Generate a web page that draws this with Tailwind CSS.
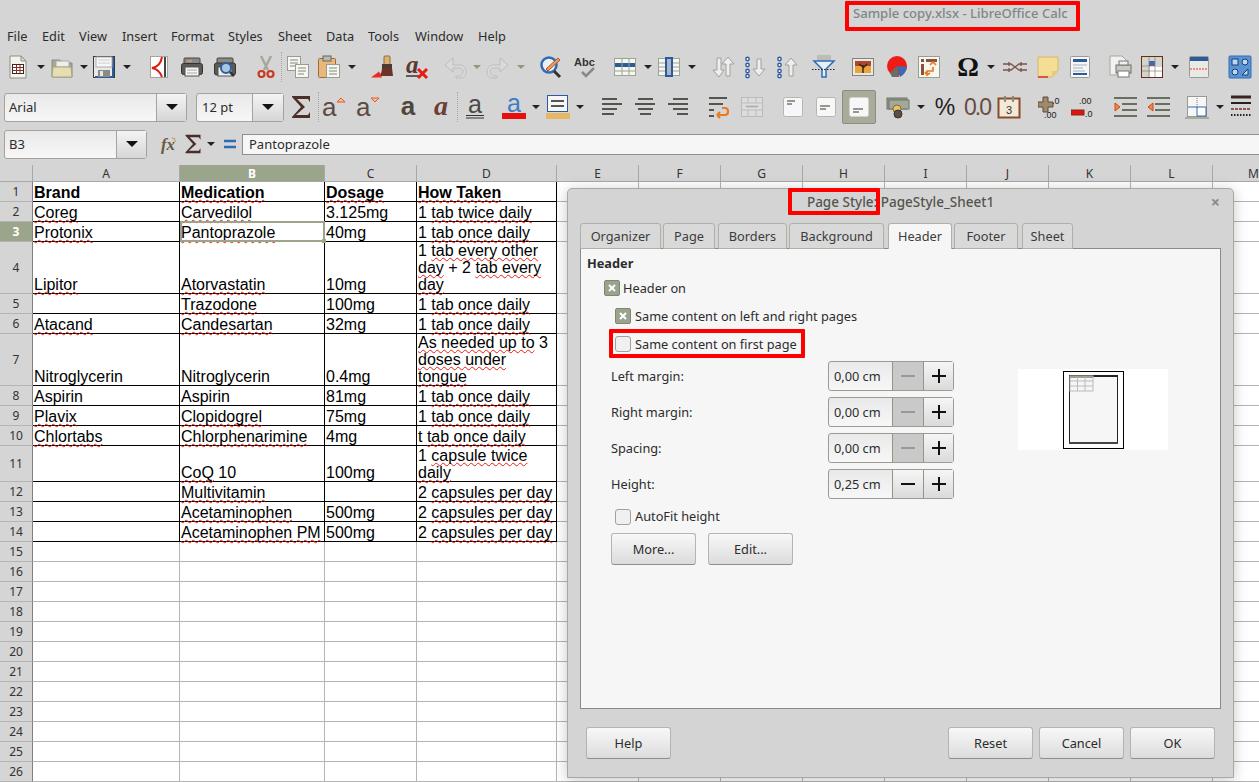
<!DOCTYPE html>
<html lang="en">
<head>
<meta charset="UTF-8">
<title>Sample copy.xlsx - LibreOffice Calc</title>
<script src="https://cdn.jsdelivr.net/npm/@tailwindcss/browser@4"></script>
</head>
<body class="bg-[#d5d5d5] overflow-hidden">
<div class="relative w-[1259px] h-[782px] overflow-hidden flex flex-col font-['Noto_Sans',sans-serif] text-[12.75px] text-[#2c2c2c]">

  <!-- Title bar -->
  <div class="h-[26px] shrink-0 flex items-center pl-[853px] pt-[2px] font-medium text-[13.1px] text-[#7d8885] whitespace-nowrap">Sample copy.xlsx - LibreOffice Calc</div>

  <!-- Menu -->
  <div class="h-[22px] shrink-0 flex items-center pl-[7px] whitespace-nowrap">
    <span class="w-[35px]">File</span><span class="w-[37px]">Edit</span><span class="w-[43px]">View</span><span class="w-[49px]">Insert</span><span class="w-[57px]">Format</span><span class="w-[50px]">Styles</span><span class="w-[48px]">Sheet</span><span class="w-[42px]">Data</span><span class="w-[47px]">Tools</span><span class="w-[63px]">Window</span><span>Help</span>
  </div>

  <!-- Standard toolbar -->
  <div class="h-[38px] shrink-0 flex items-center pl-[6px]">
    <svg class="w-6 h-6 shrink-0" viewBox="0 0 24 24"><path d="M4 1h11l5 5v17H4z" fill="#f4f4ef" stroke="#8d8d86"/><path d="M15 1v5h5z" fill="#dcdcd2" stroke="#8d8d86"/><rect x="6.500" y="9.500" width="11" height="9" fill="#fff" stroke="#3c2420"/><path d="M7 12.500h10M7 15.500h10M10.500 10v8M14 10v8" stroke="#8c2b20"/></svg>
    <svg class="w-2 h-2 shrink-0 ml-[7px]" viewBox="0 0 8 8"><path d="M0 2h8L4 6z" fill="#222"/></svg>
    <svg class="w-6 h-6 shrink-0 ml-[5px]" viewBox="0 0 24 24"><path d="M2 5h8l2 3h10v14H2z" fill="#a6a893" stroke="#8a8c7c"/><rect x="6" y="6" width="13" height="6" fill="#efefe8" stroke="#aaa"/><path d="M3 12h18l1 10H2z" fill="#e6deb0" stroke="#a8a488"/></svg>
    <svg class="w-2 h-2 shrink-0 ml-[6px]" viewBox="0 0 8 8"><path d="M0 2h8L4 6z" fill="#222"/></svg>
    <svg class="w-6 h-6 shrink-0 ml-[4px]" viewBox="0 0 24 24"><rect x="1.500" y="1.500" width="21" height="21" fill="#e9e9e6" stroke="#3a3a3a"/><path d="M21 2v20M3 22h18" stroke="#2d5c9c" stroke-width="2"/><rect x="4" y="2" width="16" height="10" fill="#f8f8f8" stroke="#aaa"/><path d="M6 5h12M6 8h12" stroke="#c9c9c9"/><rect x="6" y="15" width="12" height="7" fill="#8a8a86"/><rect x="8" y="16" width="3" height="5" fill="#e8e8e8"/></svg>
    <svg class="w-2 h-2 shrink-0 ml-[7px]" viewBox="0 0 8 8"><path d="M0 2h8L4 6z" fill="#222"/></svg>
    <svg class="w-6 h-6 shrink-0 ml-[16px]" viewBox="0 0 24 24"><rect x="3.500" y="1.500" width="17" height="21" fill="#fff" stroke="#a5a5a0"/><path d="M18 2v20" stroke="#444" stroke-width="2"/><path d="M15 2C14 8 11 12 5 13c5 1 8 3 10 9" fill="none" stroke="#e21a10" stroke-width="2"/></svg>
    <svg class="w-6 h-6 shrink-0 ml-[9px]" viewBox="0 0 24 24"><rect x="4" y="3" width="16" height="6" rx="1" fill="#8a8a84" stroke="#444"/><path d="M7 6h5" stroke="#c9a08a" stroke-width="1.500"/><rect x="1.500" y="8.500" width="21" height="11" rx="2" fill="#5b5b58" stroke="#333"/><rect x="5" y="12" width="14" height="9" fill="#f4f4f0" stroke="#555"/><path d="M7 15h10M7 18h10" stroke="#aaa"/></svg>
    <svg class="w-6 h-6 shrink-0 ml-[9px]" viewBox="0 0 24 24"><rect x="4" y="3" width="16" height="6" rx="1" fill="#8a8a84" stroke="#444"/><rect x="1.500" y="8" width="21" height="12" rx="2" fill="#5b5b58" stroke="#333"/><rect x="5" y="12" width="14" height="9" fill="#eee" stroke="#555"/><circle cx="13" cy="13" r="5" fill="#a9c6df" stroke="#2f5f9e" stroke-width="2"/><path d="M17 17l4 4" stroke="#333" stroke-width="2.500"/></svg>
    <svg class="w-6 h-6 shrink-0 ml-[17px]" viewBox="0 0 24 24"><path d="M7 1l7 14M17 1l-7 14" stroke="#a7a79e" stroke-width="2.500"/><circle cx="7.500" cy="19" r="3" fill="none" stroke="#c83a24" stroke-width="2.200"/><circle cx="16.500" cy="19" r="3" fill="none" stroke="#c83a24" stroke-width="2.200"/></svg>
    <span class="w-px h-[30px] shrink-0 ml-[3px] border-l border-dotted border-[#a8a8a8]"></span>
    <svg class="w-6 h-6 shrink-0 ml-[4px]" viewBox="0 0 24 24"><rect x="1.500" y="1.500" width="13" height="14" fill="#f6f6f2" stroke="#9b9b92"/><path d="M4 5h8M4 8h8M4 11h6" stroke="#85857d"/><rect x="9.500" y="9.500" width="13" height="13" fill="#f6f6f2" stroke="#9b9b92"/><path d="M12 13h8M12 16h8M12 19h6" stroke="#7f9070"/></svg>
    <svg class="w-6 h-6 shrink-0 ml-[7px]" viewBox="0 0 24 24"><rect x="1.500" y="3.500" width="17" height="19" rx="1" fill="#e8b77c" stroke="#9b6b3c"/><rect x="6" y="1" width="8" height="5" fill="#b9b9b0" stroke="#666"/><rect x="9.500" y="9.500" width="13" height="13" fill="#f6f6f2" stroke="#9b9b92"/><path d="M12 13h8M12 16h8M12 19h8" stroke="#7f9070"/></svg>
    <svg class="w-2 h-2 shrink-0 ml-[7px]" viewBox="0 0 8 8"><path d="M0 2h8L4 6z" fill="#222"/></svg>
    <svg class="w-6 h-6 shrink-0 ml-[15px]" viewBox="0 0 24 24"><rect x="13" y="1" width="6" height="9" rx="1" fill="#dcb274" stroke="#8f6b36"/><rect x="11" y="9" width="10" height="4" fill="#4a3a30"/><path d="M11 13h10l1 8H8c2-2 3-5 3-8z" fill="#6b3328"/><path d="M0 22.500l8-6 3 6z" fill="#ee2a1c"/></svg>
    <svg class="w-6 h-6 shrink-0 ml-[10px] overflow-visible" viewBox="0 0 24 24"><text x="1" y="18" font-family="Liberation Serif" font-style="italic" font-weight="700" font-size="25" fill="#5c3a32">a</text><path d="M1 21h13" stroke="#333" stroke-width="1.500"/><path d="M13 14l9 9M22 14l-9 9" stroke="#e81c10" stroke-width="3"/></svg>
    <svg class="w-6 h-6 shrink-0 ml-[14px]" viewBox="0 0 24 24"><path d="M10 3L2 10l8 7v-4h7c2 0 3 2 3 4s-2 4-4 4h-3v2h4c4 0 6-3 6-6s-2-7-6-7h-7z" fill="#dadad8" stroke="#bcbcba"/></svg>
    <svg class="w-2 h-2 shrink-0 ml-[6px]" viewBox="0 0 8 8"><path d="M0 2h8L4 6z" fill="#8d9a80"/></svg>
    <svg class="w-6 h-6 shrink-0 ml-[5px]" viewBox="0 0 24 24"><path d="M14 3l8 7-8 7v-4H7c-2 0-3 2-3 4s2 4 4 4h3v2H7c-4 0-6-3-6-6s2-7 6-7h7z" fill="#dadad8" stroke="#bcbcba"/></svg>
    <svg class="w-2 h-2 shrink-0 ml-[7px]" viewBox="0 0 8 8"><path d="M0 2h8L4 6z" fill="#8d9a80"/></svg>
    <svg class="w-6 h-6 shrink-0 ml-[14px]" viewBox="0 0 24 24"><circle cx="10" cy="10" r="7.500" fill="#eef0ee" stroke="#2f6cb4" stroke-width="2.500"/><path d="M15 16l6 6" stroke="#333" stroke-width="3"/><path d="M7 14L19 3l2 2L9 16z" fill="#e8a060" stroke="#b0502c"/></svg>
    <svg class="w-6 h-6 shrink-0 ml-[11px]" viewBox="0 0 24 24"><text x="0" y="11" font-family="Liberation Sans" font-weight="700" font-size="11" fill="#333">Abc</text><path d="M8 17l4 4 8-8" fill="none" stroke="#8a8a84" stroke-width="2.500"/></svg>
    <svg class="w-6 h-6 shrink-0 ml-[15px]" viewBox="0 0 24 24"><rect x="1.500" y="3.500" width="21" height="17" fill="#f6f6f2" stroke="#9ca58f"/><rect x="2" y="8" width="20" height="4" fill="#2c5a9c"/><path d="M2 16h20M9 4v16M16 4v16" stroke="#9ca58f"/></svg>
    <svg class="w-2 h-2 shrink-0 ml-[7px]" viewBox="0 0 8 8"><path d="M0 2h8L4 6z" fill="#222"/></svg>
    <svg class="w-6 h-6 shrink-0 ml-[5px]" viewBox="0 0 24 24"><rect x="1.500" y="3.500" width="21" height="17" fill="#f6f6f2" stroke="#9ca58f"/><path d="M2 8h20M2 12h20M2 16h20" stroke="#9ca58f"/><rect x="9" y="3" width="6" height="18" fill="#a9b6c4" stroke="#2c5a9c" stroke-width="2"/></svg>
    <svg class="w-2 h-2 shrink-0 ml-[7px]" viewBox="0 0 8 8"><path d="M0 2h8L4 6z" fill="#222"/></svg>
    <svg class="w-6 h-6 shrink-0 ml-[15px]" viewBox="0 0 24 24"><path d="M6 3h4v12h3l-5 7-6-7h4z" fill="#eee" stroke="#a0a098"/><path d="M17 2l6 7h-4v12h-4V9h-4z" fill="#eee" stroke="#a0a098"/></svg>
    <svg class="w-6 h-6 shrink-0 ml-[9px]" viewBox="0 0 24 24"><g fill="#fff" stroke="#2c5a9c" stroke-width="1.400"><circle cx="3.500" cy="4" r="1.700"/><circle cx="3.500" cy="10" r="1.700"/><circle cx="3.500" cy="16" r="1.700"/><circle cx="3.500" cy="21" r="1.700"/></g><path d="M13 4h4v10h4l-6 7-6-7h4z" fill="#eee" stroke="#a0a098"/></svg>
    <svg class="w-6 h-6 shrink-0 ml-[8px]" viewBox="0 0 24 24"><g fill="#fff" stroke="#2c5a9c" stroke-width="1.400"><circle cx="3.500" cy="4" r="1.700"/><circle cx="3.500" cy="10" r="1.700"/><circle cx="3.500" cy="16" r="1.700"/><circle cx="3.500" cy="21" r="1.700"/></g><path d="M15 3l6 7h-4v11h-4V10H9z" fill="#eee" stroke="#a0a098"/></svg>
    <svg class="w-6 h-6 shrink-0 ml-[12px]" viewBox="0 0 24 24"><rect x="5" y="0" width="14" height="6" fill="#bcbcb8"/><path d="M2 6h20l-8 8v8h-4v-8z" fill="#e8eef4" stroke="#2f6cb4" stroke-width="1.500"/><path d="M0 14.500h24" stroke="#222" stroke-dasharray="1.500 1.500"/></svg>
    <svg class="w-6 h-6 shrink-0 ml-[15px]" viewBox="0 0 24 24"><rect x="1.500" y="3.500" width="21" height="17" fill="#e9e9e4" stroke="#85857d"/><rect x="4" y="6" width="16" height="12" fill="#e8a43c"/><path d="M4 6h16v5H4z" fill="#a8482c"/><path d="M12 18V10M12 12l-4-3M12 13l4-4" stroke="#3a1c14" stroke-width="1.400"/></svg>
    <svg class="w-6 h-6 shrink-0 ml-[10px]" viewBox="0 0 24 24"><circle cx="12" cy="11" r="10" fill="#ee1c16"/><path d="M12 11l10 1c-1 6-5 9-7 10z" fill="#3a6cb4"/><path d="M5 18l7-7 2 11H7z" fill="#6d6d68"/></svg>
    <svg class="w-6 h-6 shrink-0 ml-[8px]" viewBox="0 0 24 24"><rect x="1.500" y="1.500" width="21" height="21" fill="#f7f7f2" stroke="#98a08a"/><rect x="9" y="4" width="11" height="3" fill="#8a5040"/><rect x="4" y="4" width="3" height="3" fill="#8a5040"/><rect x="4" y="9" width="3" height="11" fill="#8a5040"/><path d="M10 20v-4h6v-4M13 10l3-3 3 3M8 17l2 3 3-2" fill="none" stroke="#ea7a1e" stroke-width="1.700"/></svg>
    <svg class="w-6 h-6 shrink-0 ml-[15px] overflow-visible" viewBox="0 0 24 24"><text x="12" y="21" text-anchor="middle" font-family="Liberation Serif" font-weight="700" font-size="27" fill="#111">Ω</text></svg>
    <svg class="w-2 h-2 shrink-0 ml-[7px]" viewBox="0 0 8 8"><path d="M0 2h8L4 6z" fill="#222"/></svg>
    <svg class="w-6 h-6 shrink-0 ml-[8px]" viewBox="0 0 24 24"><path d="M0 9h8l4 3 4-3h8M0 15h8l4-3 4 3h8M6 7v4M18 7v4M6 13v4M18 13v4" fill="none" stroke="#7a5248" stroke-width="1.300"/></svg>
    <svg class="w-6 h-6 shrink-0 ml-[9px]" viewBox="0 0 24 24"><path d="M2 2h20v14l-6 6H2z" fill="#f4dd94" stroke="#d8b66a"/><path d="M16 22v-6h6z" fill="#e7c97a"/><path d="M2 22h10" stroke="#d83020" stroke-width="1.500"/></svg>
    <svg class="w-6 h-6 shrink-0 ml-[8px]" viewBox="0 0 24 24"><rect x="2.500" y="1.500" width="19" height="21" rx="1" fill="#f6f6f6" stroke="#9a9a94"/><rect x="5" y="4" width="14" height="3" fill="#2c5a9c"/><path d="M5 10h14M5 13h10M5 16h12" stroke="#a6b0bc"/><rect x="5" y="18" width="14" height="2" fill="#2c5a9c"/></svg>
    <svg class="w-6 h-6 shrink-0 ml-[16px]" viewBox="0 0 24 24"><path d="M2 1h12l5 5v14H2z" fill="#f2f2ee" stroke="#a5a59e"/><rect x="8" y="10" width="15" height="8" fill="#c9c9c4" stroke="#6e6e68"/><rect x="11" y="6" width="9" height="4" fill="#eee" stroke="#777"/><rect x="10" y="16" width="11" height="6" fill="#fff" stroke="#777"/></svg>
    <svg class="w-6 h-6 shrink-0 ml-[8px]" viewBox="0 0 24 24"><rect x="1.500" y="1.500" width="21" height="21" fill="#fff" stroke="#6b2c20"/><rect x="2" y="2" width="8" height="20" fill="#d4d4ce"/><rect x="2" y="2" width="20" height="8" fill="#d4d4ce"/><rect x="9" y="6" width="6" height="5" fill="#3c6cb4"/><path d="M9 2v20M15 2v20M2 11h20M2 16h20" stroke="#8a6a60" stroke-width=".6"/></svg>
    <svg class="w-2 h-2 shrink-0 ml-[7px]" viewBox="0 0 8 8"><path d="M0 2h8L4 6z" fill="#222"/></svg>
    <svg class="w-6 h-6 shrink-0 ml-[8px]" viewBox="0 0 24 24"><rect x="2.500" y="1.500" width="19" height="21" rx="1" fill="#e9e9e6" stroke="#9a9a94"/><rect x="3" y="2" width="18" height="4" fill="#2c5a9c"/><path d="M3 14h18" stroke="#ee3a20" stroke-dasharray="2 1"/></svg>
    <svg class="w-6 h-6 shrink-0 ml-[17px]" viewBox="0 0 24 24"><rect x="1" y="1" width="22" height="22" rx="1" fill="#5b93d2" stroke="#2f6cb4"/><g fill="#bcd6ee" stroke="#173f75"><rect x="4" y="4" width="6" height="6"/><circle cx="17" cy="7" r="3"/><circle cx="7" cy="17" r="3"/><path d="M14 20l6-6v6z"/></g></svg>
  </div>

  <!-- Formatting toolbar -->
  <div class="h-[42px] shrink-0 flex items-center pl-[4px]">
    <div class="w-[183px] h-[29px] shrink-0 flex rounded-[3px] border border-[#a3a39b] bg-gradient-to-b from-[#e9e9e9] to-[#f7f7f7]">
      <span class="flex-1 pl-[4px] pt-[2px] self-center text-[13px]">Arial</span>
      <span class="w-[30px] flex items-center justify-center border-l border-[#a3a39b] bg-gradient-to-b from-[#f4f4f4] to-[#d6d6d6]"><svg class="w-3 h-2" viewBox="0 0 12 8"><path d="M0 1h12L6 7z" fill="#111"/></svg></span>
    </div>
    <div class="w-[88px] h-[29px] shrink-0 ml-[9px] flex rounded-[3px] border border-[#a3a39b] bg-gradient-to-b from-[#e9e9e9] to-[#f7f7f7]">
      <span class="flex-1 pl-[5px] pt-[2px] self-center text-[13px]">12 pt</span>
      <span class="w-[31px] flex items-center justify-center border-l border-[#a3a39b] bg-gradient-to-b from-[#f4f4f4] to-[#d6d6d6]"><svg class="w-3 h-2" viewBox="0 0 12 8"><path d="M0 1h12L6 7z" fill="#111"/></svg></span>
    </div>
    <svg class="w-6 h-6 shrink-0 ml-[5px]" viewBox="0 0 24 24"><path d="M3 1h18v6l-2-3H8l8 8-9 8h12l2-3v6H3v-1l9-10L3 2z" fill="#4a2e28"/></svg>
    <span class="w-px h-[30px] shrink-0 ml-[5px] border-l border-dotted border-[#a8a8a8]"></span>
    <svg class="w-6 h-6 shrink-0 ml-[3px] overflow-visible" viewBox="0 0 24 24"><text x="0" y="21" font-family="Liberation Sans" font-size="26" fill="#5c4a44">a</text><path d="M15 7l4-4 4 4z" fill="#f4c490" stroke="#e2572a"/></svg>
    <svg class="w-6 h-6 shrink-0 ml-[10px] overflow-visible" viewBox="0 0 24 24"><text x="0" y="21" font-family="Liberation Sans" font-size="26" fill="#5c4a44">a</text><path d="M15 3l4 4 4-4z" fill="#f4c490" stroke="#e2572a"/></svg>
    <svg class="w-6 h-6 shrink-0 ml-[16px] overflow-visible" viewBox="0 0 24 24"><text x="12" y="20" text-anchor="middle" font-family="Liberation Sans" font-weight="700" font-size="26" fill="#504640">a</text></svg>
    <svg class="w-6 h-6 shrink-0 ml-[10px] overflow-visible" viewBox="0 0 24 24"><text x="11" y="20" text-anchor="middle" font-family="Liberation Serif" font-style="italic" font-size="28" font-weight="700" fill="#6b4034">a</text></svg>
    <span class="w-px h-[30px] shrink-0 ml-[3px] border-l border-dotted border-[#a8a8a8]"></span>
    <svg class="w-6 h-6 shrink-0 ml-[5px] overflow-visible" viewBox="0 0 24 24"><text x="12" y="18" text-anchor="middle" font-family="Liberation Sans" font-size="25" fill="#4a4a46">a</text><path d="M3 20.500h18M3 23h18" stroke="#333" stroke-width="1.200"/></svg>
    <svg class="w-6 h-6 shrink-0 ml-[15px] overflow-visible" viewBox="0 0 24 24"><text x="12" y="17" text-anchor="middle" font-family="Liberation Sans" font-size="25" fill="#3f7cc6">a</text><rect x="0" y="18" width="24" height="6" fill="#ea0f0f"/></svg>
    <svg class="w-2 h-2 shrink-0 ml-[6px]" viewBox="0 0 8 8"><path d="M0 2h8L4 6z" fill="#222"/></svg>
    <svg class="w-6 h-6 shrink-0 ml-[6px]" viewBox="0 0 24 24"><rect x="1.500" y="0.500" width="20" height="16" fill="#f6f6f6" stroke="#2c5a9c"/><path d="M5 6h13M5 11h13" stroke="#555" stroke-width="2"/><rect x="0" y="18" width="24" height="6" fill="#e6b765"/></svg>
    <svg class="w-2 h-2 shrink-0 ml-[6px]" viewBox="0 0 8 8"><path d="M0 2h8L4 6z" fill="#222"/></svg>
    <svg class="w-6 h-6 shrink-0 ml-[15px]" viewBox="0 0 24 24"><path d="M3 4h15M3 9h20M3 14h15M3 19h12" stroke="#55554f" stroke-width="2.200"/></svg>
    <svg class="w-6 h-6 shrink-0 ml-[10px]" viewBox="0 0 24 24"><path d="M5 4h15M2 9h20M5 14h15M7 19h11" stroke="#55554f" stroke-width="2.200"/></svg>
    <svg class="w-6 h-6 shrink-0 ml-[9px]" viewBox="0 0 24 24"><path d="M7 4h15M2 9h20M7 14h15M11 19h11" stroke="#55554f" stroke-width="2.200"/></svg>
    <svg class="w-6 h-6 shrink-0 ml-[17px]" viewBox="0 0 24 24"><path d="M2 3h18M2 9h14M2 15h5M2 21h5" stroke="#55554f" stroke-width="2.200"/><path d="M12 20h6c4 0 4-7 0-7h-3m-5 7l3-3m-3 3l3 3" fill="none" stroke="#ea7a1e" stroke-width="2.200"/></svg>
    <svg class="w-6 h-6 shrink-0 ml-[9px]" viewBox="0 0 24 24"><rect x="1.500" y="2.500" width="21" height="19" fill="#dcdcda" stroke="#bbb"/><path d="M2 8h20M2 15h20M8 3v5M16 3v5M8 15v6M16 15v6" stroke="#bbb"/><path d="M6 11.500h12" stroke="#aaa" stroke-width="1.500"/></svg>
    <svg class="w-6 h-6 shrink-0 ml-[17px]" viewBox="0 0 24 24"><rect x="2.500" y="2.500" width="19" height="19" rx="2" fill="#f7f7f7" stroke="#b3b8a8"/><path d="M6 6h8M6 9h5" stroke="#777" stroke-width="1.300"/></svg>
    <svg class="w-6 h-6 shrink-0 ml-[9px]" viewBox="0 0 24 24"><rect x="2.500" y="2.500" width="19" height="19" rx="2" fill="#f7f7f7" stroke="#b3b8a8"/><path d="M6 11h10M6 14h6" stroke="#777" stroke-width="1.300"/></svg>
    <div class="w-[34px] h-[34px] shrink-0 ml-[4px] flex items-center justify-center bg-[#a8ad9b] border border-[#8a8f7e] rounded-[2px]">
      <svg class="w-6 h-6" viewBox="0 0 24 24"><rect x="2.500" y="2.500" width="19" height="19" rx="2" fill="#f7f7f7" stroke="#d0d4c8"/><path d="M6 14h10M6 17h6" stroke="#777" stroke-width="1.300"/></svg>
    </div>
    <svg class="w-6 h-6 shrink-0 ml-[10px]" viewBox="0 0 24 24"><rect x="1" y="3" width="20" height="11" fill="#8f9684" stroke="#70776a"/><rect x="3" y="5" width="20" height="9" fill="#a3a998" stroke="#70776a"/><circle cx="11" cy="14" r="4" fill="#e8c26a" stroke="#8a6b2c"/><circle cx="12" cy="19" r="4" fill="#5c5040" stroke="#333"/></svg>
    <svg class="w-2 h-2 shrink-0 ml-[7px]" viewBox="0 0 8 8"><path d="M0 2h8L4 6z" fill="#222"/></svg>
    <svg class="w-6 h-6 shrink-0 ml-[8px] overflow-visible" viewBox="0 0 24 24"><text x="12" y="20" text-anchor="middle" font-family="Liberation Sans" font-size="23" fill="#222">%</text></svg>
    <svg class="w-6 h-6 shrink-0 ml-[8px] overflow-visible" viewBox="0 0 24 24"><text x="12" y="20" text-anchor="middle" font-family="Liberation Sans" font-size="23" fill="#6a4a40" letter-spacing="-2">0.0</text></svg>
    <svg class="w-6 h-6 shrink-0 ml-[8px]" viewBox="0 0 24 24"><rect x="1.500" y="3.500" width="21" height="19" fill="#f2e9d8" stroke="#8a4a28" stroke-width="2"/><path d="M8 1v6M16 1v6" stroke="#8a8a84" stroke-width="2"/><text x="12" y="19" text-anchor="middle" font-family="Liberation Sans" font-size="11" fill="#333">3</text></svg>
    <svg class="w-6 h-6 shrink-0 ml-[17px]" viewBox="0 0 24 24"><path d="M5 2h5v5h5v5h-5v5H5v-5H0V7h5z" fill="#a08a68" stroke="#5c4a3c"/><text x="14" y="9" font-family="Liberation Sans" font-size="9" fill="#222">.0</text><text x="6" y="23" font-family="Liberation Sans" font-size="9" fill="#222">.00</text></svg>
    <svg class="w-6 h-6 shrink-0 ml-[9px]" viewBox="0 0 24 24"><text x="8" y="9" font-family="Liberation Sans" font-size="9" fill="#222">.00</text><rect x="0" y="15" width="13" height="5" fill="#e8100c" stroke="#7a3020"/><text x="14" y="22" font-family="Liberation Sans" font-size="9" fill="#222">.0</text></svg>
    <svg class="w-6 h-6 shrink-0 ml-[18px]" viewBox="0 0 24 24"><path d="M1 3h23M9 9h15M9 15h15M1 21h23" stroke="#6b6f62" stroke-width="2"/><path d="M2 8l5 4-5 4z" fill="#ee8a3c" stroke="#c84a1c"/></svg>
    <svg class="w-6 h-6 shrink-0 ml-[9px]" viewBox="0 0 24 24"><path d="M1 3h23M9 9h15M9 15h15M1 21h23" stroke="#6b6f62" stroke-width="2"/><path d="M7 8l-5 4 5 4z" fill="#ee8a3c" stroke="#c84a1c"/></svg>
    <svg class="w-6 h-6 shrink-0 ml-[15px]" viewBox="0 0 24 24"><rect x="2.500" y="1.500" width="19" height="20" fill="#f6f6f6" stroke="#9a9a94"/><path d="M12 12h9v9H12zM12 12H3" fill="#fff" stroke="#2f6cb4"/><path d="M12 3v9" stroke="#777" stroke-dasharray="1 1"/><path d="M0 23h24" stroke="#a8ad9b" stroke-width="2"/></svg>
    <svg class="w-2 h-2 shrink-0 ml-[7px]" viewBox="0 0 8 8"><path d="M0 2h8L4 6z" fill="#222"/></svg>
    <svg class="w-6 h-6 shrink-0 ml-[5px]" viewBox="0 0 24 24"><path d="M2 2h20" stroke="#3a2420" stroke-width="3"/><path d="M2 8h20" stroke="#222" stroke-width="2"/><path d="M2 14h20" stroke="#7a3020" stroke-width="1.500" stroke-dasharray="3 1"/><path d="M2 20h20" stroke="#222" stroke-width="2" stroke-dasharray="1.500 1.500"/></svg>
  </div>

  <!-- Formula bar -->
  <div class="h-[32px] shrink-0 flex items-center pl-[4px]">
    <div class="w-[143px] h-[29px] shrink-0 flex rounded-[3px] border border-[#a3a39b] bg-gradient-to-b from-[#e9e9e9] to-[#f7f7f7]">
      <span class="flex-1 pl-[4px] pt-[2px] self-center text-[13px]">B3</span>
      <span class="w-[30px] flex items-center justify-center border-l border-[#a3a39b] bg-gradient-to-b from-[#f4f4f4] to-[#d6d6d6]"><svg class="w-3 h-2" viewBox="0 0 12 8"><path d="M0 1h12L6 7z" fill="#111"/></svg></span>
    </div>
    <svg class="w-5 h-5 shrink-0 ml-[12px] overflow-visible" viewBox="0 0 20 20"><text x="9" y="16" text-anchor="middle" font-family="Liberation Serif" font-style="italic" font-weight="700" font-size="17" fill="#6a5a44">fx</text><path d="M13 3l1 2 2-1-1 2 2 1-2 1" fill="none" stroke="#c9a860"/></svg>
    <svg class="w-5 h-5 shrink-0 ml-[4px]" viewBox="0 0 24 24"><path d="M3 1h18v6l-2-3H8l8 8-9 8h12l2-3v6H3v-1l9-10L3 2z" fill="#4a2e28"/></svg>
    <svg class="w-2 h-2 shrink-0 ml-[4px]" viewBox="0 0 8 8"><path d="M0 2h8L4 6z" fill="#222"/></svg>
    <svg class="w-4 h-4 shrink-0 ml-[7px]" viewBox="0 0 16 16"><path d="M2 5h12M2 11h12" stroke="#2f6cb4" stroke-width="2.500"/></svg>
    <div class="flex-1 h-[21px] ml-[4px] pl-[6px] pt-px flex items-center bg-[#f6f6f6] border-y border-l border-[#8f8f8f] text-[13px]">Pantoprazole</div>
  </div>

  <!-- Sheet -->
  <div class="mt-[5px] flex-1 min-h-0 overflow-hidden">
    <table class="table-fixed w-[1295px] bg-white border-separate border-spacing-0 font-['Liberation_Sans',Arial,sans-serif] text-[16px] leading-[17px] text-black">
      <colgroup><col class="w-[33px]"><col class="w-[147px]"><col class="w-[145px]"><col class="w-[92px]"><col class="w-[140px]"><col class="w-[82px]"><col class="w-[82px]"><col class="w-[82px]"><col class="w-[82px]"><col class="w-[82px]"><col class="w-[82px]"><col class="w-[82px]"><col class="w-[82px]"><col class="w-[82px]"></colgroup>
      <thead id="sheet-head"></thead>
      <tbody id="sheet-body"></tbody>
    </table>
  </div>

  <!-- Page Style dialog -->
  <div class="absolute left-[567px] top-[188px] w-[667px] h-[590px] flex flex-col bg-[#d4d4d4] border border-[#a5aa9a] rounded-t-[5px] shadow-[0_2px_14px_rgba(0,0,0,0.22)]">
    <div class="relative h-[34px] shrink-0 flex justify-center pt-[3px] font-medium text-[13.5px] text-[#55554f]">
      <span>Page Style: PageStyle_Sheet1</span>
      <span class="absolute right-[13px] top-[1px] text-[16px] font-bold text-[#8a8a84]">×</span>
    </div>
    <div class="h-[26px] shrink-0 flex items-stretch pl-[12px] text-[#3c3c3c] relative z-10 -mb-px">
      <span class="w-[81px] pt-px flex items-center justify-center rounded-t-[3px] border border-[#aeb2a6] bg-[#d9d9d9]">Organizer</span>
      <span class="w-[52px] pt-px ml-[2px] flex items-center justify-center rounded-t-[3px] border border-[#aeb2a6] bg-[#d9d9d9]">Page</span>
      <span class="w-[69px] pt-px ml-[3px] flex items-center justify-center rounded-t-[3px] border border-[#aeb2a6] bg-[#d9d9d9]">Borders</span>
      <span class="w-[95px] pt-px ml-[2px] flex items-center justify-center rounded-t-[3px] border border-[#aeb2a6] bg-[#d9d9d9]">Background</span>
      <span class="w-[64px] pt-px ml-[4px] flex items-center justify-center rounded-t-[3px] border border-b-0 border-[#aeb2a6] bg-[#f6f6f6]">Header</span>
      <span class="w-[64px] pt-px ml-[2px] flex items-center justify-center rounded-t-[3px] border border-[#aeb2a6] bg-[#d9d9d9]">Footer</span>
      <span class="w-[51px] pt-px ml-[4px] flex items-center justify-center rounded-t-[3px] border border-[#aeb2a6] bg-[#d9d9d9]">Sheet</span>
    </div>
    <div class="mx-[12px] h-[461px] shrink-0 bg-[#f6f6f6] border border-[#8a8a8a]">
      <div class="ml-[6px] mt-[7px] h-[16px] flex items-center font-bold">Header</div>
      <div class="ml-[23px] mt-[8px] h-[16px] flex items-center">
        <span class="w-4 h-4 mr-[3px] flex items-center justify-center rounded-[2px] bg-[#9aa38f] border border-[#80876f]"><svg class="w-2 h-2" viewBox="0 0 8 8"><path d="M1 1l6 6M7 1L1 7" stroke="#fff" stroke-width="2"/></svg></span><span class="pt-[2px]">Header on</span>
      </div>
      <div class="ml-[34px] mt-[12px] h-[16px] flex items-center">
        <span class="w-4 h-4 mr-[4px] flex items-center justify-center rounded-[2px] bg-[#9aa38f] border border-[#80876f]"><svg class="w-2 h-2" viewBox="0 0 8 8"><path d="M1 1l6 6M7 1L1 7" stroke="#fff" stroke-width="2"/></svg></span><span class="pt-[2px]">Same content on left and right pages</span>
      </div>
      <div class="ml-[34px] mt-[12px] h-[16px] flex items-center">
        <span class="w-4 h-4 mr-[4px] rounded-[3px] bg-[#f0f0f0] border border-[#a0a0a0]"></span><span class="pt-[2px]">Same content on first page</span>
      </div>
      <div class="ml-[30px] mt-[9px] flex">
        <div class="w-[343px]">
          <div class="flex flex-col gap-[6px]">
            <div class="h-[30px] flex items-center">
              <span class="w-[217px] pt-[2px]">Left margin:</span>
              <div class="w-[126px] h-[30px] flex rounded-[3px] border border-[#9b9b92] bg-gradient-to-b from-[#e9e9e9] to-[#f7f7f7]">
                <span class="flex-1 pl-[5px] pt-[2px] self-center">0,00 cm</span>
                <span class="w-[31px] flex items-center justify-center border-l border-[#8f9684] bg-[#c9c9c9]"><svg class="w-[14px] h-[14px]" viewBox="0 0 14 14"><path d="M0 7h14" stroke="#999" stroke-width="2"/></svg></span>
                <span class="w-[30px] flex items-center justify-center border-l border-[#8f9684] bg-gradient-to-b from-[#f6f6f6] to-[#dadada]"><svg class="w-[14px] h-[14px]" viewBox="0 0 14 14"><path d="M0 7h14M7 0v14" stroke="#111" stroke-width="2"/></svg></span>
              </div>
            </div>
            <div class="h-[30px] flex items-center">
              <span class="w-[217px] pt-[2px]">Right margin:</span>
              <div class="w-[126px] h-[30px] flex rounded-[3px] border border-[#9b9b92] bg-gradient-to-b from-[#e9e9e9] to-[#f7f7f7]">
                <span class="flex-1 pl-[5px] pt-[2px] self-center">0,00 cm</span>
                <span class="w-[31px] flex items-center justify-center border-l border-[#8f9684] bg-[#c9c9c9]"><svg class="w-[14px] h-[14px]" viewBox="0 0 14 14"><path d="M0 7h14" stroke="#999" stroke-width="2"/></svg></span>
                <span class="w-[30px] flex items-center justify-center border-l border-[#8f9684] bg-gradient-to-b from-[#f6f6f6] to-[#dadada]"><svg class="w-[14px] h-[14px]" viewBox="0 0 14 14"><path d="M0 7h14M7 0v14" stroke="#111" stroke-width="2"/></svg></span>
              </div>
            </div>
            <div class="h-[30px] flex items-center">
              <span class="w-[217px] pt-[2px]">Spacing:</span>
              <div class="w-[126px] h-[30px] flex rounded-[3px] border border-[#9b9b92] bg-gradient-to-b from-[#e9e9e9] to-[#f7f7f7]">
                <span class="flex-1 pl-[5px] pt-[2px] self-center">0,00 cm</span>
                <span class="w-[31px] flex items-center justify-center border-l border-[#8f9684] bg-[#c9c9c9]"><svg class="w-[14px] h-[14px]" viewBox="0 0 14 14"><path d="M0 7h14" stroke="#999" stroke-width="2"/></svg></span>
                <span class="w-[30px] flex items-center justify-center border-l border-[#8f9684] bg-gradient-to-b from-[#f6f6f6] to-[#dadada]"><svg class="w-[14px] h-[14px]" viewBox="0 0 14 14"><path d="M0 7h14M7 0v14" stroke="#111" stroke-width="2"/></svg></span>
              </div>
            </div>
            <div class="h-[30px] flex items-center">
              <span class="w-[217px] pt-[2px]">Height:</span>
              <div class="w-[126px] h-[30px] flex rounded-[3px] border border-[#9b9b92] bg-gradient-to-b from-[#e9e9e9] to-[#f7f7f7]">
                <span class="flex-1 pl-[5px] pt-[2px] self-center">0,25 cm</span>
                <span class="w-[31px] flex items-center justify-center border-l border-[#8f9684] bg-gradient-to-b from-[#f6f6f6] to-[#dadada]"><svg class="w-[14px] h-[14px]" viewBox="0 0 14 14"><path d="M0 7h14" stroke="#111" stroke-width="2"/></svg></span>
                <span class="w-[30px] flex items-center justify-center border-l border-[#8f9684] bg-gradient-to-b from-[#f6f6f6] to-[#dadada]"><svg class="w-[14px] h-[14px]" viewBox="0 0 14 14"><path d="M0 7h14M7 0v14" stroke="#111" stroke-width="2"/></svg></span>
              </div>
            </div>
          </div>
          <div class="ml-[4px] mt-[10px] h-[16px] flex items-center">
            <span class="w-4 h-4 mr-[4px] rounded-[3px] bg-[#f0f0f0] border border-[#a0a0a0]"></span><span>AutoFit height</span>
          </div>
          <div class="mt-[8px] flex gap-[12px]">
            <button class="w-[85px] h-[32px] pt-px rounded-[3px] border border-[#b5b5ae] border-b-[#8f8f88] bg-gradient-to-b from-[#f8f8f8] to-[#dcdcdc]">More...</button>
            <button class="w-[85px] h-[32px] pt-px rounded-[3px] border border-[#b5b5ae] border-b-[#8f8f88] bg-gradient-to-b from-[#f8f8f8] to-[#dcdcdc]">Edit...</button>
          </div>
        </div>
        <div class="ml-[64px] mt-[8px] w-[150px] h-[81px] bg-white flex justify-center items-center">
          <div class="w-[61px] h-[78px] border border-black flex justify-center items-center">
            <svg class="w-[49px] h-[69px]" viewBox="0 0 49 69"><rect x=".5" y=".5" width="48" height="68" fill="#f6f6f6" stroke="#222"/><rect x="0" y="0" width="49" height="2" fill="#222"/><rect x="0" y="67" width="49" height="2" fill="#444"/><rect x="1" y="1" width="23" height="15" fill="#f6f6f6" stroke="#bbb"/><path d="M1 2h23" stroke="#9aa38f" stroke-width="2"/><path d="M1 6h23M1 11h23M8.500 2v14M16 2v14" stroke="#bbb"/></svg>
          </div>
        </div>
      </div>
    </div>
    <div class="mt-[18px] mx-[18px] flex">
      <button class="w-[85px] h-[32px] pt-px rounded-[3px] border border-[#b5b5ae] border-b-[#8f8f88] bg-gradient-to-b from-[#f8f8f8] to-[#dcdcdc]">Help</button>
      <button class="w-[85px] h-[32px] pt-px ml-auto rounded-[3px] border border-[#b5b5ae] border-b-[#8f8f88] bg-gradient-to-b from-[#f8f8f8] to-[#dcdcdc]">Reset</button>
      <button class="w-[85px] h-[32px] pt-px ml-[6px] rounded-[3px] border border-[#b5b5ae] border-b-[#8f8f88] bg-gradient-to-b from-[#f8f8f8] to-[#dcdcdc]">Cancel</button>
      <button class="w-[85px] h-[32px] pt-px ml-[6px] rounded-[3px] border border-[#b5b5ae] border-b-[#8f8f88] bg-gradient-to-b from-[#f8f8f8] to-[#dcdcdc]">OK</button>
    </div>
  </div>

  <!-- Red annotation boxes drawn over the screenshot -->
  <div class="absolute left-[845px] top-[1px] w-[235px] h-[30px] border-[4px] border-[#f00] rounded-[1px]"></div>
  <div class="absolute left-[788px] top-[188px] w-[92px] h-[27px] border-[4px] border-[#f00] rounded-[1px]"></div>
  <div class="absolute left-[609px] top-[329px] w-[196px] h-[29px] border-[4px] border-[#f00] rounded-[1px]"></div>
</div>

<script>
  // *word* gets the spell check squiggle
  const rows = [
    [20, 'Brand', '*Medication*', '*Dosage*', '*How Taken*'],
    [20, '*Coreg*', '*Carvedilol*', '3.125mg', '1 *tab twice daily*'],
    [20, '*Protonix*', '*Pantoprazole*', '40mg', '1 *tab once daily*'],
    [52, '*Lipitor*', '*Atorvastatin*', '10mg', '1 *tab every other*<br>*day* + 2 *tab every*<br>*day*'],
    [20, '', '*Trazodone*', '100mg', '1 *tab once daily*'],
    [20, '*Atacand*', '*Candesartan*', '32mg', '1 *tab once daily*'],
    [52, 'Nitroglycerin', 'Nitroglycerin', '0.4mg', '*As needed up to* 3<br>*doses under*<br>*tongue*'],
    [20, 'Aspirin', 'Aspirin', '81mg', '1 *tab once daily*'],
    [20, '*Plavix*', '*Clopidogrel*', '75mg', '1 *tab once daily*'],
    [20, '*Chlortabs*', '*Chlorphenarimine*', '4mg', 't *tab once daily*'],
    [36, '', '*CoQ* 10', '100mg', '1 *capsule twice*<br>*daily*'],
    [20, '', '*Multivitamin*', '', '2 *capsules per day*'],
    [20, '', '*Acetaminophen*', '500mg', '2 *capsules per day*'],
    [20, '', '*Acetaminophen PM*', '500mg', '2 *capsules per day*']
  ];
  const squiggle = s => s.replace(/\*(.+?)\*/g, '<span class="underline decoration-wavy decoration-[#ee1c10] decoration-1 underline-offset-[1px] [text-decoration-skip-ink:none]">$1</span>');
  const hdrCell = `h-[17px] p-0 pt-px text-center font-['Noto_Sans',sans-serif] font-normal text-[12px] leading-none text-[#333] bg-[#d5d5d5] border-r border-b border-[#a8a8a8] overflow-hidden`;
  const hdrActive = `h-[17px] p-0 pt-px text-center font-['Noto_Sans',sans-serif] font-bold text-[12px] leading-none text-white bg-[#9aa58c] border-r border-b border-[#a8a8a8] overflow-hidden`;
  const rowHdr = `p-0 text-center font-['Noto_Sans',sans-serif] text-[12px] leading-none text-[#333] bg-[#d5d5d5] border-r border-b border-r-[#808080] border-b-[#b4b4b4]`;
  const rowHdrActive = `p-0 text-center font-['Noto_Sans',sans-serif] font-bold text-[12px] leading-none text-white bg-[#9aa58c] border-r border-b border-r-[#808080] border-b-[#b4b4b4]`;
  const inked = 'relative p-0 pl-px align-bottom whitespace-nowrap border-r border-b border-black';
  const plain = 'p-0 border-r border-b border-[#b4b4b4]';

  const cols = 'ABCDEFGHIJKLM'.split('');
  document.getElementById('sheet-head').innerHTML = `<tr><th class="${hdrCell}"></th>` +
    cols.map(c => `<th class="${c === 'B' ? hdrActive : hdrCell}">${c}</th>`).join('') + '</tr>';

  let html = '';
  for (let n = 1; n <= 26; n++) {
    const row = rows[n - 1] || [20];
    html += `<tr style="height:${row[0]}px"><td class="${n === 3 ? rowHdrActive : rowHdr}">${n}</td>`;
    for (let c = 0; c < 13; c++) {
      if (c < 4 && n <= 14) {
        const text = squiggle(row[c + 1]);
        const cursor = n === 3 && c === 1
          ? '<div class="absolute z-10 left-0 top-[-1px] right-[-1px] bottom-[-1px] border-2 border-[#9aa58c]"><div class="absolute right-[-3px] bottom-[-3px] w-[4px] h-[4px] bg-[#9aa58c]"></div></div>'
          : '';
        html += `<td class="${inked}${n === 1 ? ' font-bold' : ''}">${cursor}${text}</td>`;
      } else {
        html += `<td class="${plain}"></td>`;
      }
    }
    html += '</tr>';
  }
  document.getElementById('sheet-body').innerHTML = html;
</script>
</body>
</html>
